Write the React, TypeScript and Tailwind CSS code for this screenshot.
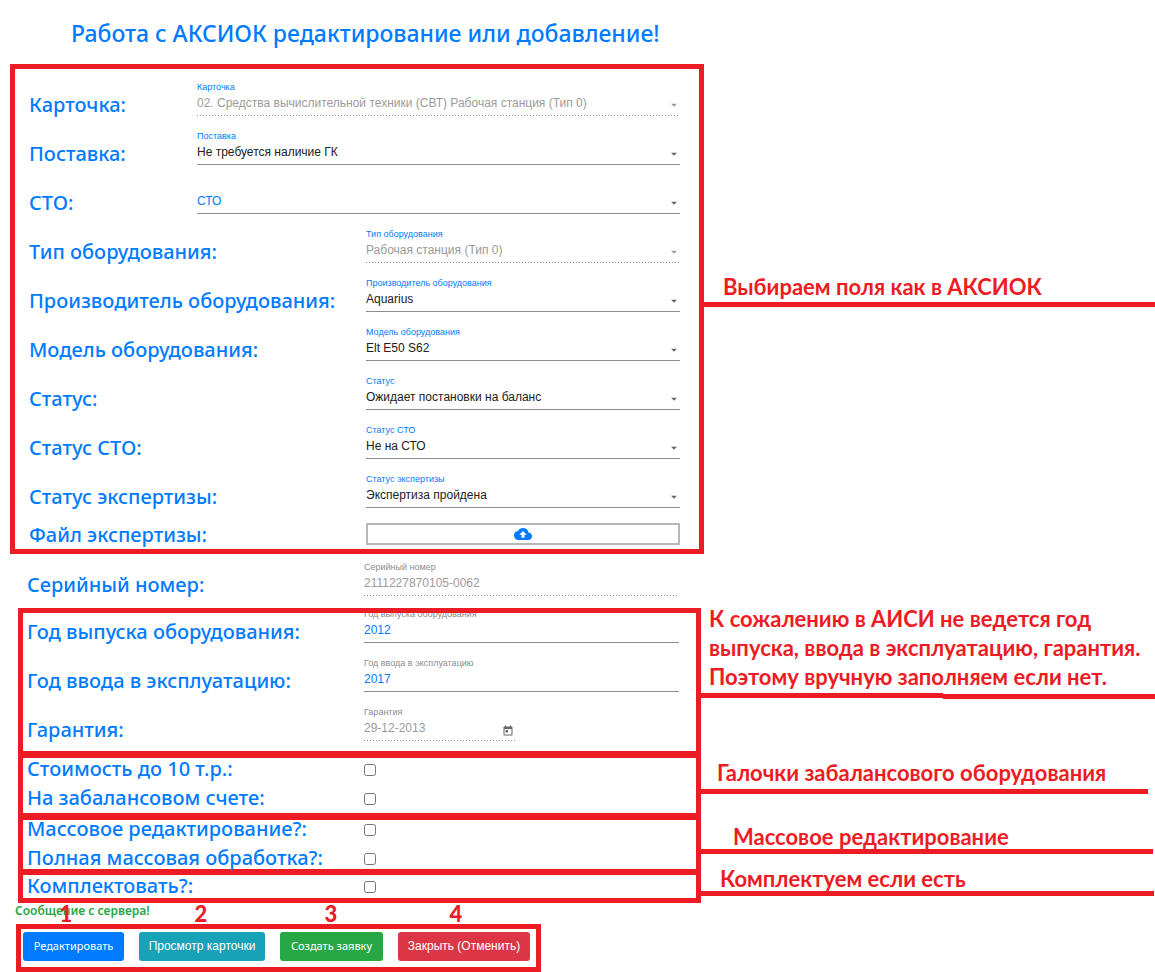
import { useId, type ReactNode } from "react";
import { MdArrowDropDown, MdCloudUpload, MdToday } from "react-icons/md";

const DOTTED =
  "h-px bg-[repeating-linear-gradient(90deg,#8c8c8c_0_1px,transparent_1px_3px)]";
const SOLID = "h-px bg-[#8c8c8c]";

function RowLabel({ htmlFor, wide = true, children }: { htmlFor: string; wide?: boolean; children: ReactNode }) {
  return (
    <label
      htmlFor={htmlFor}
      className={`block shrink-0 whitespace-nowrap font-['Noto_Sans'] text-[20px] leading-6 font-medium text-[#007bff] ${
        wide ? "w-[337px]" : "w-[168px]"
      }`}
    >
      {children}
    </label>
  );
}

function SelectRow({
  label,
  caption,
  value,
  wide = true,
  disabled = false,
  empty = false,
}: {
  label: string;
  caption: string;
  value: string;
  wide?: boolean;
  disabled?: boolean;
  empty?: boolean;
}) {
  const id = useId();
  const tone = disabled ? "text-[#9b9b9b]" : empty ? "text-[#007bff]" : "text-[#212121]";
  return (
    <div className="flex h-[49px]">
      <div className="pt-[19px]">
        <RowLabel htmlFor={id} wide={wide}>
          {label}
        </RowLabel>
      </div>
      <div className="min-w-0 flex-1 pt-2">
        <div className="h-[10px] text-[9px] leading-[10px] text-[#007bff]">{empty ? "" : caption}</div>
        <div className="relative">
          <select
            id={id}
            disabled={disabled}
            className={`block h-[23px] w-full appearance-none bg-transparent pb-[2px] text-[12px] opacity-100 outline-none ${tone}`}
          >
            <option>{value}</option>
          </select>
          <MdArrowDropDown
            className={`pointer-events-none absolute top-[6px] -right-px size-[14px] ${
              disabled ? "text-[#9b9b9b]" : "text-[#666666]"
            }`}
          />
        </div>
        <div className={disabled ? DOTTED : SOLID} />
      </div>
    </div>
  );
}

function InputRow({
  label,
  caption,
  value,
  disabled = false,
  calendar = false,
}: {
  label: string;
  caption: string;
  value: string;
  disabled?: boolean;
  calendar?: boolean;
}) {
  const id = useId();
  return (
    <div className="flex h-[49px]">
      <div className="w-[337px] pt-[19px]">
        <RowLabel htmlFor={id}>{label}</RowLabel>
      </div>
      <div className={`pt-2 ${calendar ? "w-[152px]" : "min-w-0 flex-1"}`}>
        <div className="h-[10px] text-[9px] leading-[10px] text-[#8c8c8c]">{caption}</div>
        <div className="relative">
          <input
            id={id}
            defaultValue={value}
            disabled={disabled}
            className={`block h-[23px] w-full bg-transparent pb-[2px] text-[12px] outline-none ${
              disabled ? "text-[#9b9b9b]" : "text-[#007bff]"
            }`}
          />
          {calendar && (
            <button type="button" aria-label="Открыть календарь" className="absolute top-2 right-[2px] text-[#666666]">
              <MdToday className="size-3" />
            </button>
          )}
        </div>
        <div className={disabled ? DOTTED : SOLID} />
      </div>
    </div>
  );
}

function CheckRow({ label, compact = false }: { label: string; compact?: boolean }) {
  const id = useId();
  return (
    <div className={`flex items-center ${compact ? "h-[23px]" : "h-[29px]"}`}>
      <div className="w-[337px] pb-[2px]">
        <RowLabel htmlFor={id}>{label}</RowLabel>
      </div>
      <input id={id} type="checkbox" className="size-3" />
    </div>
  );
}

const NOTE = "flex flex-col justify-end whitespace-nowrap font-['Lato'] text-[22px] font-bold text-[#ed1c24]";
const FRAME = "w-[683px] border-[#ed1c24] border-x-[5px] pl-1 pr-[17px]";

function ActionButton({
  className,
  badge,
  badgeClass,
  children,
}: {
  className: string;
  badge: string;
  badgeClass: string;
  children: ReactNode;
}) {
  return (
    <div className="relative">
      <span
        className={`absolute -top-[30px] -translate-x-1/2 font-['Lato'] text-[22px] leading-6 font-black text-[#ed1c24] ${badgeClass}`}
      >
        {badge}
      </span>
      <button type="button" className={`h-[29px] rounded-[3px] whitespace-nowrap text-white ${className}`}>
        {children}
      </button>
    </div>
  );
}

export default function App() {
  return (
    <main className="min-h-screen overflow-x-hidden bg-white font-['Liberation_Sans',Arial,sans-serif]">
      <h1 className="h-16 pt-[17px] pl-[71px] font-['Noto_Sans'] text-[23px] leading-8 font-medium whitespace-nowrap text-[#007bff]">
        Работа с АКСИОК редактирование или добавление!
      </h1>

      <div className="flex items-start pl-[10px]">
        <section className="w-[694px] border-5 border-[#ed1c24] pt-[5px] pr-[19px] pl-[14px]">
          <SelectRow wide={false} disabled label="Карточка:" caption="Карточка" value="02. Средства вычислительной техники (СВТ) Рабочая станция (Тип 0)" />
          <SelectRow wide={false} label="Поставка:" caption="Поставка" value="Не требуется наличие ГК" />
          <SelectRow wide={false} empty label="СТО:" caption="СТО" value="СТО" />
          <SelectRow disabled label="Тип оборудования:" caption="Тип оборудования" value="Рабочая станция (Тип 0)" />
          <SelectRow label="Производитель оборудования:" caption="Производитель оборудования" value="Aquarius" />
          <SelectRow label="Модель оборудования:" caption="Модель оборудования" value="Elt E50 S62" />
          <SelectRow label="Статус:" caption="Статус" value="Ожидает постановки на баланс" />
          <SelectRow label="Статус СТО:" caption="Статус СТО" value="Не на СТО" />
          <SelectRow label="Статус экспертизы:" caption="Статус экспертизы" value="Экспертиза пройдена" />
          <div className="flex h-[34px] items-start pt-2">
            <RowLabel htmlFor="expert-file">Файл экспертизы:</RowLabel>
            <button
              id="expert-file"
              type="button"
              aria-label="Загрузить файл экспертизы"
              className="flex h-[22px] flex-1 items-center justify-center border-2 border-[#b8b8b8] text-[#007bff]"
            >
              <MdCloudUpload className="size-[18px]" />
            </button>
          </div>
        </section>
        <p className={`${NOTE} h-[243px] flex-1 border-b-5 border-[#ed1c24] pb-[3px] pl-[19px] leading-6`}>
          Выбираем поля как в АКСИОК
        </p>
      </div>

      <div className="h-[54px] w-[678px] pl-[27px]">
        <InputRow disabled label="Серийный номер:" caption="Серийный номер" value="2111227870105-0062" />
      </div>

      <div className="flex items-start pl-[18px]">
        <section className={`${FRAME} overflow-hidden border-t-5 border-b-7 pb-[3px]`}>
          <div className="-mt-3">
            <InputRow label="Год выпуска оборудования:" caption="Год выпуска оборудования" value="2012" />
            <InputRow label="Год ввода в эксплуатацию:" caption="Год ввода в эксплуатацию" value="2017" />
            <InputRow disabled calendar label="Гарантия:" caption="Гарантия" value="29-12-2013" />
          </div>
        </section>
        <div className="flex-1">
          <p className={`${NOTE} h-[85px] pb-[2px] pl-2 leading-[29px]`}>
            <span>К сожалению в АИСИ не ведется год</span>
            <span>выпуска, ввода в эксплуатацию, гарантия.</span>
            <span>Поэтому вручную заполняем если нет.</span>
          </p>
          <div className="flex">
            <div className="h-[5px] w-[242px] bg-[#ed1c24]" />
            <div className="mt-px h-[5px] flex-1 bg-[#ed1c24]" />
          </div>
        </div>
      </div>

      <div className="flex items-start pl-[18px]">
        <section className={`${FRAME} flow-root border-b-7`}>
          <div className="-mt-[3px]">
            <CheckRow label="Стоимость до 10 т.р.:" />
            <CheckRow label="На забалансовом счете:" />
          </div>
        </section>
        <p className={`${NOTE} mr-[7px] h-9 flex-1 border-b-5 border-[#ed1c24] pb-1 pl-4 leading-6`}>
          Галочки забалансового оборудования
        </p>
      </div>

      <div className="flex items-start pl-[18px]">
        <section className={`${FRAME} flow-root border-b-6`}>
          <div className="-mt-[5px] -mb-1">
            <CheckRow label="Массовое редактирование?:" />
            <CheckRow label="Полная массовая обработка?:" />
          </div>
        </section>
        <p className={`${NOTE} mr-[2px] h-[34px] flex-1 border-b-5 border-[#ed1c24] pl-8 leading-6`}>
          Массовое редактирование
        </p>
      </div>

      <div className="flex items-start pl-[18px]">
        <section className={`${FRAME} border-b-5`}>
          <CheckRow compact label="Комплектовать?:" />
        </section>
        <p className={`${NOTE} mr-px h-[21px] flex-1 border-b-5 border-[#ed1c24] pl-[19px] leading-6`}>
          Комплектуем если есть
        </p>
      </div>

      <p className="h-[21px] pl-[15px] font-['Noto_Sans'] text-[12px] leading-4 font-semibold text-[#28a745]">
        Сообщение с сервера!
      </p>

      <div className="ml-4 flex h-12 w-[525px] gap-[15px] border-5 border-[#ed1c24] pt-[3px] pl-[2px]">
        <ActionButton badge="1" badgeClass="left-[43px]" className="w-[101px] bg-[#007bff] font-['Noto_Sans'] text-[11px]">
          Редактировать
        </ActionButton>
        <ActionButton badge="2" badgeClass="left-[62px]" className="w-[126px] bg-[#17a2b8] pb-[2px] text-[12px]">
          Просмотр карточки
        </ActionButton>
        <ActionButton badge="3" badgeClass="left-[51px]" className="w-[103px] bg-[#28a745] font-['Noto_Sans'] text-[11px]">
          Создать заявку
        </ActionButton>
        <ActionButton badge="4" badgeClass="left-[58px]" className="w-[132px] bg-[#dc3545] pb-[2px] text-[12px]">
          Закрыть (Отменить)
        </ActionButton>
      </div>
    </main>
  );
}
